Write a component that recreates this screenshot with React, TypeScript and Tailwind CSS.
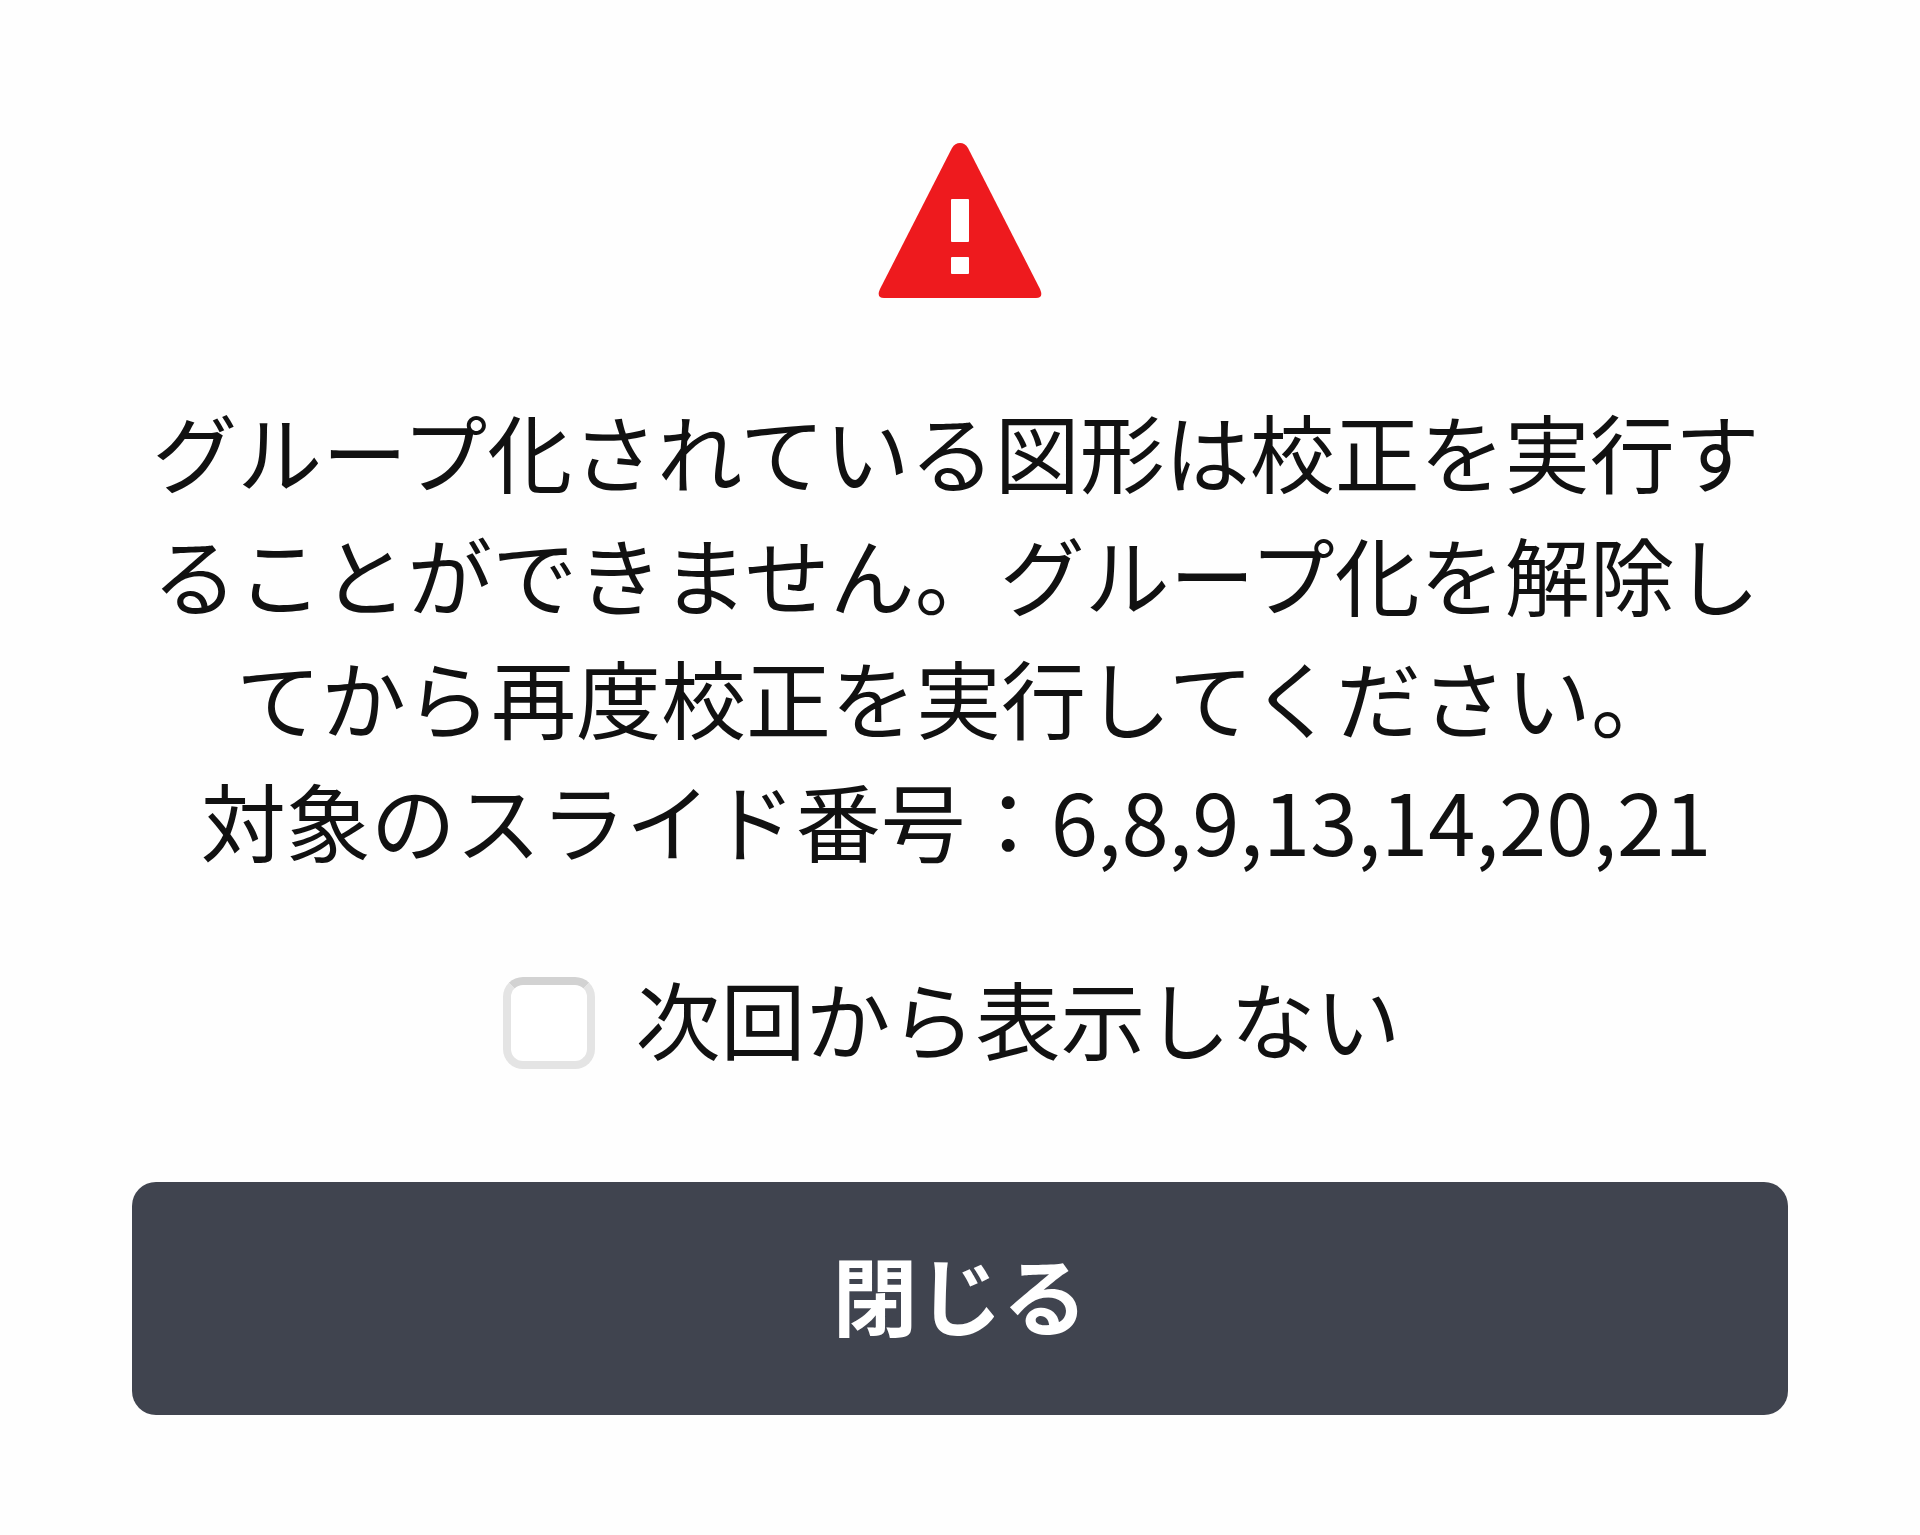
import { useState } from "react";

function WarningIcon() {
  return (
    <svg viewBox="0 0 164 156" className="w-[164px] h-[156px]" aria-hidden="true">
      <path
        d="M74 6Q77 1 82 1Q87 1 90 6L162 147Q166 156 158 156H6Q-2 156 2 147Z"
        fill="#ee1a1e"
      />
      <rect x="73" y="57" width="18" height="43" rx="1" fill="#fff" />
      <rect x="73" y="115" width="18" height="17" rx="1" fill="#fff" />
    </svg>
  );
}

export default function App() {
  const [open, setOpen] = useState(true);
  const [skipNext, setSkipNext] = useState(false);

  if (!open) return null;

  return (
    <div
      role="alertdialog"
      aria-describedby="message"
      lang="ja"
      className="min-h-screen bg-[#fefefe] px-[132px] pt-[142px] pb-[120px] flex flex-col items-center text-[85px] leading-[123px] text-[#111111] font-['Noto_Sans_CJK_JP',sans-serif]"
    >
      <WarningIcon />

      <p id="message" className="mt-[90px] pr-2 text-center">
        グループ化されている図形は校正を実行することができません。グループ化を解除してから再度校正を実行してください。
        <br />
        対象のスライド番号：6,8,9,13,14,20,21
      </p>

      <label className="mt-[75px] pr-4 flex items-center gap-10">
        <input
          type="checkbox"
          checked={skipNext}
          onChange={(e) => setSkipNext(e.target.checked)}
          className="appearance-none mt-3 w-[92px] h-[92px] bg-white border-8 border-[#e4e4e4] border-t-[#d2d2d2] rounded-[20px] checked:bg-[#40444f]"
        />
        次回から表示しない
      </label>

      <button
        type="button"
        onClick={() => setOpen(false)}
        className="mt-[104px] w-full pt-[49px] pb-[61px] bg-[#40444f] text-white font-bold rounded-3xl"
      >
        閉じる
      </button>
    </div>
  );
}
